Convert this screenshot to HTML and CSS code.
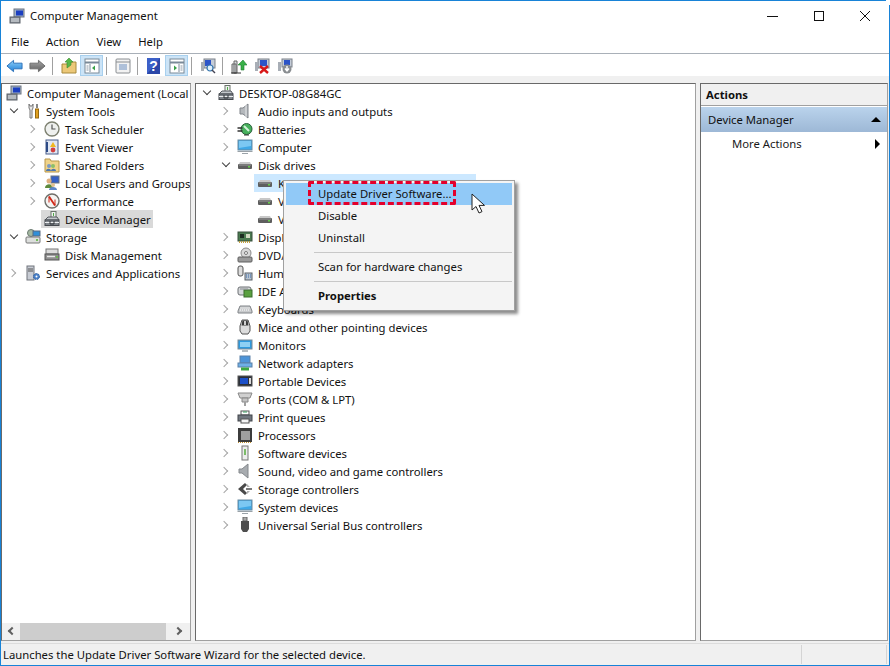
FILE: index.html
```html
<!DOCTYPE html>
<html lang="en">
<head>
  <meta charset="UTF-8">
  <title>Computer Management</title>
  <link rel="stylesheet" href="styles.css">
</head>
<body>

  <!-- shared tree and toolbar icons, 16 unit grid -->
  <svg class="defs" width="0" height="0">
    <defs>
      <linearGradient id="g-blue" x1="0" y1="0" x2="0" y2="1">
        <stop offset="0" stop-color="#8fd0f8"/>
        <stop offset="1" stop-color="#1f7fd8"/>
      </linearGradient>
      <linearGradient id="g-gray" x1="0" y1="0" x2="0" y2="1">
        <stop offset="0" stop-color="#a8a8a8"/>
        <stop offset="1" stop-color="#5e5e5e"/>
      </linearGradient>
      <symbol id="i-pc" viewBox="0 0 16 16">
        <rect x="5" y="1" width="10" height="8" fill="#9fb0c8" stroke="#6c7480"/>
        <rect x="7" y="2.5" width="7" height="5" fill="#1c3fc0"/>
        <rect x="1" y="9" width="10" height="6" fill="#8b9199" stroke="#5a6068"/>
        <path d="M2 11h8M2 13h8" stroke="#dfe3e6"/>
      </symbol>
      <symbol id="i-tools" viewBox="0 0 16 16">
        <path d="M4 1v4l1 2v8h2V7l1-2V1L7 3H5z" fill="#e8e8e8" stroke="#777"/>
        <path d="M12 1v4" stroke="#888" stroke-width="2"/>
        <rect x="10.5" y="6" width="3" height="9" fill="#e0a020" stroke="#96690f"/>
      </symbol>
      <symbol id="i-clock" viewBox="0 0 16 16">
        <circle cx="8" cy="8" r="7" fill="#eef0ee" stroke="#7d8070" stroke-width="1.4"/>
        <path d="M8 3.5V8h3.5" fill="none" stroke="#555" stroke-width="1.2"/>
      </symbol>
      <symbol id="i-log" viewBox="0 0 16 16">
        <rect x="2" y="1" width="12" height="14" fill="#dfe6f2" stroke="#4a5f8c"/>
        <path d="M3 3v10" stroke="#2c4a86" stroke-width="2"/>
        <path d="M9 3l3 5H6z" fill="#f0b820"/>
        <circle cx="9" cy="11" r="2.4" fill="#d24040"/>
      </symbol>
      <symbol id="i-share" viewBox="0 0 16 16">
        <path d="M1 4V2h5l1 2h8v11H1z" fill="#f0d48a" stroke="#b8964a"/>
        <circle cx="5" cy="9" r="2" fill="#7b9ac4"/>
        <circle cx="9" cy="9" r="2" fill="#8bbf6a"/>
        <path d="M2 14c0-3 5-3 5 0zM7 14c0-3 5-3 5 0z" fill="#4d76ad"/>
      </symbol>
      <symbol id="i-users" viewBox="0 0 16 16">
        <rect x="7" y="1" width="8" height="7" fill="#3560c4" stroke="#6c7480"/>
        <circle cx="5" cy="6" r="2.5" fill="#e0b080"/>
        <path d="M1 13c0-5 8-5 8 0z" fill="#5e8a3c"/>
        <circle cx="9" cy="10" r="2" fill="#e0c090"/>
        <path d="M5 15c0-4 8-4 8 0z" fill="#5c86c8"/>
      </symbol>
      <symbol id="i-perf" viewBox="0 0 16 16">
        <circle cx="8" cy="8" r="7" fill="#f4f4f2" stroke="#6f6f6a" stroke-width="1.4"/>
        <path d="M5 3.5l6 9" stroke="#d02818" stroke-width="1.8"/>
        <path d="M5 3.5v6M11 12.5v-6" stroke="#d02818"/>
      </symbol>
      <symbol id="i-dev" viewBox="0 0 16 16">
        <rect x="7" y="0.5" width="5" height="6" fill="#eef2ee" stroke="#6a726a"/>
        <path d="M9.5 2v3" stroke="#50a848"/>
        <path d="M1 9l3-3h9l2 3z" fill="#c4c8cc" stroke="#53575c"/>
        <rect x="1" y="9" width="14" height="5.5" fill="#7f848a" stroke="#45494e"/>
        <path d="M1 11.5h14" stroke="#eceef0"/>
        <path d="M6 10v3h4v-3" fill="none" stroke="#33363a"/>
      </symbol>
      <symbol id="i-store" viewBox="0 0 16 16">
        <circle cx="6" cy="4" r="3.5" fill="#a4b8a0" stroke="#6a7a70"/>
        <rect x="8" y="2" width="7" height="5" fill="#2f8fd8" stroke="#5a6a80"/>
        <rect x="1" y="8" width="14" height="6" rx="1" fill="#dcdedc" stroke="#777"/>
        <circle cx="12" cy="11" r="1" fill="#50b030"/>
      </symbol>
      <symbol id="i-diskm" viewBox="0 0 16 16">
        <rect x="2" y="2" width="12" height="5" fill="#dcdcdc" stroke="#777"/>
        <rect x="1" y="7" width="14" height="6" fill="#8f8f8f" stroke="#555"/>
        <path d="M3 9.5h8" stroke="#e8e8e8" stroke-width="1.4"/>
        <circle cx="13" cy="10" r="1" fill="#60c040"/>
      </symbol>
      <symbol id="i-serv" viewBox="0 0 16 16">
        <rect x="2" y="1" width="7" height="14" fill="#c8ccd4" stroke="#70747c"/>
        <path d="M3 4h5M3 6h5" stroke="#555"/>
        <circle cx="11.5" cy="11.5" r="3" fill="#4a80c8" stroke="#2a5a9c" stroke-dasharray="1.5 1"/>
        <circle cx="11.5" cy="11.5" r="1" fill="#fff"/>
      </symbol>
      <symbol id="i-audio" viewBox="0 0 16 16">
        <path d="M3 5h3l5-4v14l-5-4H3z" fill="#b4b8bc" stroke="#80848a"/>
        <path d="M9 2v12" stroke="#e6e8ea"/>
      </symbol>
      <symbol id="i-batt" viewBox="0 0 16 16">
        <circle cx="9.5" cy="8" r="5.5" fill="#46b05c" stroke="#28603a"/>
        <path d="M7 5l5 5" stroke="#d4f2da" stroke-width="2"/>
        <path d="M0.5 7h5M0.5 10h5" stroke="#333" stroke-width="1.4"/>
        <path d="M7 14h5" stroke="#333"/>
      </symbol>
      <symbol id="i-mon" viewBox="0 0 16 16">
        <rect x="1" y="1" width="14" height="10" fill="#3fa8e6" stroke="#6a8aa0"/>
        <path d="M2 2h12v5L2 9z" fill="#7cc8f2"/>
        <path d="M0.5 12.5h15M5 14.5h6" stroke="#9aa2a8" stroke-width="1.2"/>
      </symbol>
      <symbol id="i-disk" viewBox="0 0 16 16">
        <path d="M2 7l1-2h10l1 2z" fill="#c8c8c8"/>
        <rect x="1" y="7" width="14" height="5" rx="1" fill="#5e5e5e"/>
        <path d="M2 8h12" stroke="#9a9a9a"/>
        <rect x="11" y="9" width="2" height="1.5" fill="#66d048"/>
      </symbol>
      <symbol id="i-gpu" viewBox="0 0 16 16">
        <rect x="1" y="3" width="14" height="9" fill="#4a7a50" stroke="#38503c"/>
        <rect x="3" y="5" width="4" height="4" fill="#1c2c20"/>
        <rect x="9" y="5" width="4" height="4" fill="#d0d8c0"/>
        <path d="M2 13h12" stroke="#c0a040" stroke-dasharray="1 1" stroke-width="2"/>
      </symbol>
      <symbol id="i-dvd" viewBox="0 0 16 16">
        <circle cx="9" cy="6" r="5" fill="#d8d8d8" stroke="#8a8a8a"/>
        <circle cx="9" cy="6" r="1.5" fill="#fff" stroke="#777"/>
        <rect x="1" y="10" width="14" height="5" rx="1" fill="#9a9a9a" stroke="#5f5f5f"/>
      </symbol>
      <symbol id="i-hid" viewBox="0 0 16 16">
        <rect x="1" y="1" width="5" height="10" rx="2" fill="#dcdcdc" stroke="#555"/>
        <rect x="8" y="8" width="7" height="7" fill="#b8c4d0" stroke="#5a6068"/>
        <path d="M9 10h5M9 12h5" stroke="#3868a8" stroke-dasharray="1 1"/>
      </symbol>
      <symbol id="i-ide" viewBox="0 0 16 16">
        <rect x="1" y="4" width="13" height="8" rx="2" fill="#d6d8da" stroke="#6c7074"/>
        <rect x="7" y="7" width="8" height="7" fill="#5aa040" stroke="#3a6c2c"/>
        <path d="M3 6h8" stroke="#8a8e92"/>
      </symbol>
      <symbol id="i-kbd" viewBox="0 0 16 16">
        <path d="M1 10l2-5h10l2 5v2H1z" fill="#c8cacc" stroke="#808488"/>
        <path d="M3.5 7h9M3 9h10" stroke="#fff" stroke-dasharray="1 1"/>
      </symbol>
      <symbol id="i-mouse" viewBox="0 0 16 16">
        <path d="M5 1h6l2 6v5l-2 3H5l-2-3V7z" fill="#dcdcdc" stroke="#555"/>
        <path d="M5.5 1.5h5l1 5h-7z" fill="#3a3a3a"/>
        <rect x="7" y="2" width="2" height="4" fill="#cfcfcf"/>
      </symbol>
      <symbol id="i-monitor" viewBox="0 0 16 16">
        <rect x="1" y="3" width="14" height="9" fill="#2f9ade" stroke="#7a8a96"/>
        <rect x="3" y="5" width="10" height="5" fill="#8ed0f4"/>
        <path d="M5 14h6" stroke="#9aa2a8" stroke-width="1.4"/>
      </symbol>
      <symbol id="i-net" viewBox="0 0 16 16">
        <rect x="3" y="1" width="10" height="7" fill="#4d94d8" stroke="#5a80a8"/>
        <rect x="1" y="8" width="14" height="4" fill="#6fb0e6" stroke="#5a80a8"/>
        <path d="M4 14h8" stroke="#3ca840" stroke-width="3"/>
      </symbol>
      <symbol id="i-port" viewBox="0 0 16 16">
        <rect x="1" y="3" width="14" height="10" fill="#2c3038" stroke="#555"/>
        <rect x="3" y="5" width="8" height="6" fill="#1c50c8"/>
        <rect x="12" y="5" width="2" height="6" fill="#d8d8d8"/>
      </symbol>
      <symbol id="i-ports" viewBox="0 0 16 16">
        <path d="M1 2h14l-2 5H3z" fill="#d0d0d0" stroke="#888"/>
        <path d="M5 7h6v4H5z" fill="#c4c4c4" stroke="#888"/>
        <rect x="7" y="11" width="2" height="4" fill="#a0a0a0"/>
      </symbol>
      <symbol id="i-print" viewBox="0 0 16 16">
        <rect x="4" y="2" width="8" height="4" fill="#fff" stroke="#555"/>
        <rect x="1" y="6" width="14" height="6" fill="#70767e" stroke="#40444a"/>
        <rect x="4" y="10" width="8" height="4" fill="#f4f4f4" stroke="#555"/>
        <path d="M6 3h4" stroke="#3aa060"/>
      </symbol>
      <symbol id="i-cpu" viewBox="0 0 16 16">
        <rect x="1" y="1" width="14" height="14" fill="#3c3c3c"/>
        <rect x="4" y="4" width="9" height="9" fill="#a0a0a0"/>
        <path d="M1 15.5h14" stroke="#c09030" stroke-dasharray="1 1"/>
      </symbol>
      <symbol id="i-soft" viewBox="0 0 16 16">
        <rect x="5" y="1" width="6" height="14" fill="#ececec" stroke="#777"/>
        <path d="M8 4v6" stroke="#60b048" stroke-width="1.6"/>
      </symbol>
      <symbol id="i-sound" viewBox="0 0 16 16">
        <path d="M2 6h3l6-5v14l-6-5H2z" fill="#a8acb0" stroke="#84888c"/>
      </symbol>
      <symbol id="i-stor" viewBox="0 0 16 16">
        <path d="M8 2L1 8l7 6 2-2-4-4 4-4z" fill="#4a4a4a"/>
        <path d="M9 7h6v2H9z" fill="#7a7a7a"/>
        <path d="M10 3l3 3h-3zM10 13l3-3h-3z" fill="#b0b0b0"/>
      </symbol>
      <symbol id="i-usb" viewBox="0 0 16 16">
        <rect x="6" y="0" width="4" height="4" fill="#a8a8a8" stroke="#666"/>
        <path d="M4 4h8v8l-2 3H6l-2-3z" fill="#4e4e4e"/>
      </symbol>
      <symbol id="i-left" viewBox="0 0 18 16">
        <path d="M1 8l7-6v3h9v6H8v3z" fill="url(#g-blue)" stroke="#2a70b8"/>
      </symbol>
      <symbol id="i-right" viewBox="0 0 18 16">
        <path d="M17 8l-7-6v3H1v6h9v3z" fill="url(#g-gray)" stroke="#6a6a6a"/>
      </symbol>
      <symbol id="i-up" viewBox="0 0 16 16">
        <path d="M1 6h5l1-2h8v11H1z" fill="#ecc878" stroke="#a88a3c"/>
        <path d="M6 10V4H4l4-4 4 4h-2v3z" fill="#58b848" stroke="#3a8c30" stroke-width=".6"/>
      </symbol>
      <symbol id="i-panel-l" viewBox="0 0 16 16">
        <rect x="1" y="1" width="14" height="14" fill="#fff" stroke="#7a8a98"/>
        <path d="M1 4.5h14" stroke="#7a8a98" stroke-width="2"/>
        <path d="M6 6v8" stroke="#7a8a98"/>
        <path d="M11 7.5v5l-3-2.5z" fill="#3aa048"/>
        <path d="M2.5 8h2M2.5 10h2M2.5 12h2" stroke="#8a98a6"/>
      </symbol>
      <symbol id="i-panel-r" viewBox="0 0 16 16">
        <rect x="1" y="1" width="14" height="14" fill="#fff" stroke="#7a8a98"/>
        <path d="M1 4.5h14" stroke="#7a8a98" stroke-width="2"/>
        <path d="M10 6v8" stroke="#7a8a98"/>
        <path d="M5 7.5v5l3-2.5z" fill="#3aa048"/>
        <path d="M11.5 8h2M11.5 10h2M11.5 12h2" stroke="#8a98a6"/>
      </symbol>
      <symbol id="i-props" viewBox="0 0 16 16">
        <rect x="1" y="1" width="14" height="14" rx="1" fill="#f2f2f2" stroke="#8a8e92"/>
        <path d="M1 4h14" stroke="#8a8e92"/>
        <path d="M4 7h8M4 9h8M4 11h8" stroke="#6a8ec0"/>
      </symbol>
      <symbol id="i-help" viewBox="0 0 14 16">
        <rect x="0" y="0" width="13" height="16" fill="#2a46a8"/>
        <path d="M0 0h13L0 16z" fill="#3c60c8"/>
        <text x="6.5" y="13" class="help-mark">?</text>
      </symbol>
      <symbol id="i-scan" viewBox="0 0 16 16">
        <rect x="4" y="1" width="11" height="9" fill="#c4ccd8" stroke="#7a8088"/>
        <rect x="5" y="2" width="6" height="6" fill="#2c54c8"/>
        <rect x="1" y="4" width="3" height="9" fill="#a8aeb6"/>
        <circle cx="10" cy="10" r="3" fill="#dff0fa" stroke="#3878b0" stroke-width="1.2"/>
        <path d="M12 12l3 3" stroke="#445" stroke-width="1.4"/>
      </symbol>
      <symbol id="i-update" viewBox="0 0 16 16">
        <path d="M1 6h4v9H1zM3 3h3v12H3z" fill="#d8dce0" stroke="#666"/>
        <path d="M0 15h10" stroke="#333"/>
        <path d="M10 12V7H7l5-5 4 5h-3v5z" fill="#38b048" stroke="#208030" stroke-width=".6"/>
      </symbol>
      <symbol id="i-remove" viewBox="0 0 16 16">
        <rect x="4" y="1" width="11" height="9" fill="#c4ccd8" stroke="#7a8088"/>
        <rect x="6" y="2" width="7" height="6" fill="#2c54c8"/>
        <rect x="1" y="4" width="3" height="9" fill="#a8aeb6"/>
        <path d="M6 8l8 7M14 8l-8 7" stroke="#d81818" stroke-width="2.4"/>
      </symbol>
      <symbol id="i-install" viewBox="0 0 16 16">
        <rect x="5" y="1" width="10" height="8" fill="#c4ccd8" stroke="#7a8088"/>
        <rect x="7" y="2" width="6" height="5" fill="#2c54c8"/>
        <rect x="1" y="4" width="3" height="9" fill="#a8aeb6"/>
        <circle cx="10" cy="11" r="4.5" fill="#8a8e92"/>
        <path d="M10 8v4M8 10.5l2 2.5 2-2.5" fill="none" stroke="#fff" stroke-width="1.4"/>
      </symbol>
    </defs>
  </svg>

  <div class="window">
    <header class="titlebar">
      <svg class="icon title-icon"><use href="#i-pc"/></svg>
      <span class="title-text">Computer Management</span>
      <div class="win-buttons">
        <span class="win-btn"><svg width="12" height="12"><path d="M0 6.5h11" stroke="#111"/></svg></span>
        <span class="win-btn"><svg width="12" height="12"><rect x="1.5" y="1.5" width="9" height="9" fill="none" stroke="#111"/></svg></span>
        <span class="win-btn"><svg width="12" height="12"><path d="M1 1l10 10M11 1L1 11" stroke="#111"/></svg></span>
      </div>
    </header>

    <nav class="menubar">
      <span>File</span><span>Action</span><span>View</span><span>Help</span>
    </nav>

    <div class="toolbar">
      <button class="tool"><svg class="icon-arrow"><use href="#i-left"/></svg></button>
      <button class="tool"><svg class="icon-arrow"><use href="#i-right"/></svg></button>
      <i class="tool-sep"></i>
      <button class="tool"><svg class="icon"><use href="#i-up"/></svg></button>
      <button class="tool on"><svg class="icon"><use href="#i-panel-l"/></svg></button>
      <i class="tool-sep"></i>
      <button class="tool"><svg class="icon"><use href="#i-props"/></svg></button>
      <i class="tool-sep"></i>
      <button class="tool"><svg class="icon"><use href="#i-help"/></svg></button>
      <button class="tool on"><svg class="icon"><use href="#i-panel-r"/></svg></button>
      <i class="tool-sep"></i>
      <button class="tool"><svg class="icon"><use href="#i-scan"/></svg></button>
      <i class="tool-sep"></i>
      <button class="tool"><svg class="icon"><use href="#i-update"/></svg></button>
      <button class="tool"><svg class="icon"><use href="#i-remove"/></svg></button>
      <button class="tool"><svg class="icon"><use href="#i-install"/></svg></button>
    </div>

    <main class="panes">
      <section class="pane pane-nav">
        <div class="tree-scroll">
          <div class="row lv0"><i class="exp"></i><svg class="icon"><use href="#i-pc"/></svg><span>Computer Management (Local</span></div>
          <div class="row lv1"><i class="exp open"></i><svg class="icon"><use href="#i-tools"/></svg><span>System Tools</span></div>
          <div class="row lv2"><i class="exp shut"></i><svg class="icon"><use href="#i-clock"/></svg><span>Task Scheduler</span></div>
          <div class="row lv2"><i class="exp shut"></i><svg class="icon"><use href="#i-log"/></svg><span>Event Viewer</span></div>
          <div class="row lv2"><i class="exp shut"></i><svg class="icon"><use href="#i-share"/></svg><span>Shared Folders</span></div>
          <div class="row lv2"><i class="exp shut"></i><svg class="icon"><use href="#i-users"/></svg><span>Local Users and Groups</span></div>
          <div class="row lv2"><i class="exp shut"></i><svg class="icon"><use href="#i-perf"/></svg><span>Performance</span></div>
          <div class="row lv2"><i class="exp"></i><div class="sel-gray"><svg class="icon"><use href="#i-dev"/></svg><span>Device Manager</span></div></div>
          <div class="row lv1"><i class="exp open"></i><svg class="icon"><use href="#i-store"/></svg><span>Storage</span></div>
          <div class="row lv2"><i class="exp"></i><svg class="icon"><use href="#i-diskm"/></svg><span>Disk Management</span></div>
          <div class="row lv1"><i class="exp shut"></i><svg class="icon"><use href="#i-serv"/></svg><span>Services and Applications</span></div>
        </div>
        <div class="hscroll">
          <i class="arr arr-l"></i>
          <div class="hthumb"></div>
          <i class="arr arr-r"></i>
        </div>
      </section>

      <section class="pane pane-main">
        <div class="row lv0"><i class="exp open"></i><svg class="icon"><use href="#i-dev"/></svg><span>DESKTOP-08G84GC</span></div>
        <div class="row lv1"><i class="exp shut"></i><svg class="icon"><use href="#i-audio"/></svg><span>Audio inputs and outputs</span></div>
        <div class="row lv1"><i class="exp shut"></i><svg class="icon"><use href="#i-batt"/></svg><span>Batteries</span></div>
        <div class="row lv1"><i class="exp shut"></i><svg class="icon"><use href="#i-mon"/></svg><span>Computer</span></div>
        <div class="row lv1"><i class="exp open"></i><svg class="icon"><use href="#i-disk"/></svg><span>Disk drives</span></div>
        <div class="row lv2"><i class="exp"></i><div class="sel-blue"><svg class="icon"><use href="#i-disk"/></svg><span>Kingston DataTraveler 3.0 USB Device</span></div></div>
        <div class="row lv2"><i class="exp"></i><svg class="icon"><use href="#i-disk"/></svg><span>VMware Virtual disk</span></div>
        <div class="row lv2"><i class="exp"></i><svg class="icon"><use href="#i-disk"/></svg><span>VMware Virtual disk</span></div>
        <div class="row lv1"><i class="exp shut"></i><svg class="icon"><use href="#i-gpu"/></svg><span>Display adapters</span></div>
        <div class="row lv1"><i class="exp shut"></i><svg class="icon"><use href="#i-dvd"/></svg><span>DVD/CD-ROM drives</span></div>
        <div class="row lv1"><i class="exp shut"></i><svg class="icon"><use href="#i-hid"/></svg><span>Human Interface Devices</span></div>
        <div class="row lv1"><i class="exp shut"></i><svg class="icon"><use href="#i-ide"/></svg><span>IDE ATA/ATAPI controllers</span></div>
        <div class="row lv1"><i class="exp shut"></i><svg class="icon"><use href="#i-kbd"/></svg><span>Keyboards</span></div>
        <div class="row lv1"><i class="exp shut"></i><svg class="icon"><use href="#i-mouse"/></svg><span>Mice and other pointing devices</span></div>
        <div class="row lv1"><i class="exp shut"></i><svg class="icon"><use href="#i-monitor"/></svg><span>Monitors</span></div>
        <div class="row lv1"><i class="exp shut"></i><svg class="icon"><use href="#i-net"/></svg><span>Network adapters</span></div>
        <div class="row lv1"><i class="exp shut"></i><svg class="icon"><use href="#i-port"/></svg><span>Portable Devices</span></div>
        <div class="row lv1"><i class="exp shut"></i><svg class="icon"><use href="#i-ports"/></svg><span>Ports (COM &amp; LPT)</span></div>
        <div class="row lv1"><i class="exp shut"></i><svg class="icon"><use href="#i-print"/></svg><span>Print queues</span></div>
        <div class="row lv1"><i class="exp shut"></i><svg class="icon"><use href="#i-cpu"/></svg><span>Processors</span></div>
        <div class="row lv1"><i class="exp shut"></i><svg class="icon"><use href="#i-soft"/></svg><span>Software devices</span></div>
        <div class="row lv1"><i class="exp shut"></i><svg class="icon"><use href="#i-sound"/></svg><span>Sound, video and game controllers</span></div>
        <div class="row lv1"><i class="exp shut"></i><svg class="icon"><use href="#i-stor"/></svg><span>Storage controllers</span></div>
        <div class="row lv1"><i class="exp shut"></i><svg class="icon"><use href="#i-mon"/></svg><span>System devices</span></div>
        <div class="row lv1"><i class="exp shut"></i><svg class="icon"><use href="#i-usb"/></svg><span>Universal Serial Bus controllers</span></div>
      </section>

      <section class="pane pane-actions">
        <div class="act-head">Actions</div>
        <div class="act-group"><span>Device Manager</span><i class="tri-up"></i></div>
        <div class="act-item"><span>More Actions</span><i class="tri-right"></i></div>
      </section>
    </main>

    <footer class="statusbar">
      <div class="st-main">Launches the Update Driver Software Wizard for the selected device.</div>
      <div class="st-cell"></div>
      <div class="st-cell"></div>
    </footer>

    <!-- context menu over the tree -->
    <div class="ctx-menu">
      <div class="ctx-item hot">Update Driver Software...</div>
      <div class="ctx-item">Disable</div>
      <div class="ctx-item">Uninstall</div>
      <div class="ctx-sep"></div>
      <div class="ctx-item">Scan for hardware changes</div>
      <div class="ctx-sep"></div>
      <div class="ctx-item bold">Properties</div>
    </div>
    <div class="red-mark"></div>
    <svg class="cursor" width="16" height="22" viewBox="0 0 16 22">
      <path d="M1 1v16l4-3.5 3 6.5 3-1.4-3-6.2h5.5z" fill="#fff" stroke="#222"/>
    </svg>
  </div>

</body>
</html>
```

FILE: styles.css
```css
/* reset */
*, *::before, *::after {
  box-sizing: border-box;
}
html, body {
  margin: 0;
  padding: 0;
  background-color: #fff;
}
body {
  font-family: "Noto Sans", "Open Sans", sans-serif;
  font-size: 11.3px;
  color: #111;
  overflow: hidden;
}
.defs {
  position: absolute;
}
i {
  font-style: normal;
  display: block;
}
.icon {
  width: 16px;
  height: 16px;
  flex-shrink: 0;
  display: block;
}
.help-mark {
  font-family: "Liberation Sans", sans-serif;
  font-size: 14px;
  font-weight: bold;
  fill: #fff;
  text-anchor: middle;
}

/* window frame */
.window {
  position: relative;
  width: 890px;
  height: 666px;
  display: flex;
  flex-direction: column;
  background-color: #f0f0f0;
  border: 1px solid #1883d7;
}
/* the top right corner of the frame is cut off in the shot */
.window::after {
  content: "";
  position: absolute;
  top: -1px;
  right: -1px;
  width: 4px;
  height: 5px;
  background-color: #fff;
}

/* title + menu */
.titlebar {
  display: flex;
  align-items: center;
  height: 29px;
  padding-left: 8px;
  background-color: #fff;
}
.title-text {
  margin-left: 5px;
}
.win-buttons {
  display: flex;
  margin-left: auto;
  margin-right: 1px;
}
.win-btn {
  width: 46px;
  height: 29px;
  display: flex;
  align-items: center;
  justify-content: center;
}
.menubar {
  display: flex;
  gap: 17px;
  height: 24px;
  align-items: center;
  padding-left: 10px;
  background-color: #fff;
  border-bottom: 1px solid #a9b0b8;
}

/* toolbar */
.toolbar {
  display: flex;
  align-items: center;
  height: 22px;
  padding: 1px 0 0 2px;
  background-color: #fff;
}
.tool {
  width: 23px;
  height: 21px;
  padding: 0;
  background: none;
  border: 1px solid transparent;
  display: flex;
  align-items: center;
  justify-content: center;
}
.tool.on {
  background-color: #cce4f7;
  border-color: #a8d0ee;
}
.icon-arrow {
  width: 17px;
  height: 16px;
  display: block;
}
.tool-sep {
  width: 1px;
  height: 18px;
  margin: 0 4px 0 3px;
  background-color: #a0a0a0;
}

/* three panes */
.panes {
  display: flex;
  gap: 4px;
  height: 565px;
  padding-top: 7px;
  background-color: #f0f0f0;
}
.pane {
  background-color: #fff;
  border: 1px solid #a0a0a0;
  border-top-color: #696969;
  border-left-color: #696969;
}
.pane-nav {
  width: 190px;
  display: flex;
  flex-direction: column;
}
.pane-main {
  width: 501px;
}
.pane-actions {
  width: 188px;
}
.tree-scroll {
  flex: 1;
  overflow: hidden;
}
.row {
  display: flex;
  align-items: center;
  height: 18px;
  white-space: nowrap;
}
.row .icon {
  margin: 0 5px 0 3px;
}
.pane-nav .lv0 { padding-left: 0; }
.pane-nav .lv1 { padding-left: 4px; }
.pane-nav .lv2 { padding-left: 23px; }
.pane-main .lv0 { padding-left: 3px; }
.pane-main .lv1 { padding-left: 22px; }
.pane-main .lv2 { padding-left: 42px; }
.pane-nav .lv0 .exp { width: 1px; }
.exp {
  width: 16px;
  height: 16px;
  flex-shrink: 0;
  position: relative;
}
.exp.shut::before,
.exp.open::before {
  content: "";
  position: absolute;
  width: 6px;
  height: 6px;
  border-right: 1.5px solid #a6a6a6;
  border-bottom: 1.5px solid #a6a6a6;
}
.exp.shut::before {
  left: 3px;
  top: 5px;
  transform: rotate(-45deg);
}
.exp.open::before {
  left: 5px;
  top: 3px;
  border-color: #404040;
  transform: rotate(45deg);
}
.sel-gray,
.sel-blue {
  display: flex;
  align-items: center;
  height: 18px;
}
.sel-gray {
  width: 112px;
  background-color: #d9d9d9;
}
.sel-blue {
  width: 222px;
  background-color: #cce8ff;
}

/* scroll bar under the left tree */
.hscroll {
  display: flex;
  align-items: center;
  height: 17px;
  background-color: #f0f0f0;
}
.arr {
  width: 18px;
  height: 17px;
  position: relative;
}
.arr::before {
  content: "";
  position: absolute;
  top: 5px;
  width: 6px;
  height: 6px;
  border-left: 2px solid #606060;
  border-bottom: 2px solid #606060;
}
.arr-l::before {
  left: 7px;
  transform: rotate(45deg);
}
.arr-r::before {
  left: 3px;
  transform: rotate(-135deg);
}
.hthumb {
  width: 146px;
  height: 17px;
  background-color: #cdcdcd;
}
.hscroll .arr-r {
  margin-left: auto;
}

/* actions pane */
.act-head {
  height: 22px;
  padding: 3px 5px 0;
  font-weight: bold;
  background-color: #f0f0f0;
  border-bottom: 1px solid #a0a0a0;
}
.act-group {
  display: flex;
  align-items: center;
  justify-content: space-between;
  height: 25px;
  margin-top: 1px;
  padding: 0 6px 0 7px;
  background: linear-gradient(#bad3ec, #9db8d6);
}
.act-item {
  display: flex;
  align-items: center;
  justify-content: space-between;
  height: 23px;
  padding: 0 7px 0 31px;
  color: #1a1a1a;
}
.tri-up {
  width: 0;
  height: 0;
  border-left: 5px solid transparent;
  border-right: 5px solid transparent;
  border-bottom: 5px solid #000;
}
.tri-right {
  width: 0;
  height: 0;
  border-top: 5px solid transparent;
  border-bottom: 5px solid transparent;
  border-left: 5px solid #000;
}

/* status bar */
.statusbar {
  display: flex;
  height: 21px;
  margin-top: 2px;
  background-color: #f0f0f0;
  border-top: 1px solid #dcdcdc;
}
.st-main {
  width: 690px;
  padding: 3px 0 0 2px;
  white-space: nowrap;
}
.st-cell {
  width: 111px;
  margin-top: 1px;
  border-right: 1px solid #d4d4d4;
}
.st-cell:last-child {
  width: 85px;
}

/* context menu */
.ctx-menu {
  position: absolute;
  left: 282px;
  top: 179px;
  width: 232px;
  height: 131px;
  padding: 2px;
  background-color: #f4f4f4;
  border: 1px solid #a0a0a0;
  box-shadow: 3px 3px 3px rgba(0, 0, 0, 0.45);
}
.ctx-item {
  height: 22px;
  line-height: 22px;
  padding-left: 32px;
}
.ctx-item.hot {
  background-color: #91c9f7;
}
.ctx-item.bold {
  font-weight: bold;
}
.ctx-sep {
  height: 1px;
  margin: 3px 0 3px 28px;
  background-color: #c8c8c8;
}
.red-mark {
  position: absolute;
  left: 307px;
  top: 180px;
  width: 148px;
  height: 24px;
  border: 3px dashed #e4002b;
  border-radius: 2px;
}
.cursor {
  position: absolute;
  left: 470px;
  top: 192px;
}
```
